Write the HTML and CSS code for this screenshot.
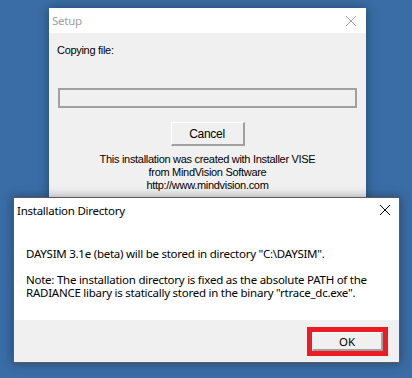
FILE: index.html
```html
<!DOCTYPE html>
<html>
<head>
  <title>Setup</title>
  <link rel="stylesheet" href="styles.css">
</head>
<body>

  <!-- Setup window (behind) -->
  <div class="window setup">
    <div class="titlebar">
      <span class="title">Setup</span>
      <svg class="close" width="12" height="12" viewBox="0 0 12 12">
        <path d="M1 1 L11 11 M11 1 L1 11" stroke="#a0a0a0" stroke-width="1" fill="none"/>
      </svg>
    </div>
    <div class="setup-body">
      <div class="label">Copying file:</div>
      <div class="progress"></div>
      <button class="classic cancel">Cancel</button>
      <p class="credits">
        This installation was created with Installer VISE<br>
        from MindVision Software<br>
        http://www.mindvision.com
      </p>
    </div>
  </div>

  <!-- Installation Directory message box -->
  <div class="window dialog">
    <div class="dialog-main">
      <div class="titlebar">
        <span class="title">Installation Directory</span>
        <svg class="close" width="12" height="12" viewBox="0 0 12 12">
          <path d="M1 1 L11 11 M11 1 L1 11" stroke="#000" stroke-width="1" fill="none"/>
        </svg>
      </div>
      <div class="message">
        <p>DAYSIM 3.1e (beta) will be stored in directory "C:\DAYSIM".</p>
        <p>Note: The installation directory is fixed as the absolute PATH of the<br>
        RADIANCE libary is statically stored in the binary "rtrace_dc.exe".</p>
      </div>
    </div>
    <div class="footer">
      <div class="highlight">
        <button class="classic ok">OK</button>
      </div>
    </div>
  </div>

</body>
</html>
```

FILE: styles.css
```css
html, body {
  margin: 0;
  padding: 0;
}

body {
  width: 412px;
  height: 378px;
  background-color: #3a6ca5;
  position: relative;
  overflow: hidden;
}

.window {
  position: absolute;
  background-color: #f0f0f0;
  box-shadow: 0 0 10px rgba(0, 0, 0, 0.35);
}

.titlebar {
  display: flex;
  align-items: center;
  justify-content: space-between;
  background-color: #fff;
}

/* Setup window */
.setup {
  left: 49px;
  top: 8px;
  width: 317px;
  height: 200px;
  font-family: "Liberation Sans", Arial, sans-serif;
  font-size: 11px;
  letter-spacing: -0.3px;
  color: #000;
}

.setup .titlebar {
  height: 25px;
  padding: 0 9px 0 3px;
}

.setup .title {
  font-family: "Noto Sans", sans-serif;
  font-size: 11.5px;
  letter-spacing: -0.25px;
  color: #a0a0a0;
}

.setup-body {
  display: flex;
  flex-direction: column;
  align-items: center;
  padding: 11px 8px 0;
}

.label {
  align-self: flex-start;
  line-height: 13px;
}

.progress {
  margin-top: 31px;
  width: 295px;
  height: 16px;
  border: 2px solid #a0a0a0;
  background-color: #f0f0f0;
}

button.classic {
  font-family: "Liberation Sans", Arial, sans-serif;
  font-size: 12px;
  letter-spacing: -0.3px;
  color: #000;
  background-color: #f0f0f0;
  border-style: solid;
  border-width: 1px 2px 2px 1px;
  border-color: #fff #a0a0a0 #a0a0a0 #fff;
  padding: 0;
  margin: 0;
}

button.cancel {
  margin-top: 14px;
  width: 74px;
  height: 24px;
}

.credits {
  margin: 7px 0 0;
  text-align: center;
  line-height: 13px;
}

/* Installation Directory dialog */
.dialog {
  left: 13px;
  top: 197px;
  width: 385px;
  height: 164px;
  border: 1px solid #5a5a5a;
  font-family: "Noto Sans", "Open Sans", sans-serif;
  font-size: 11.5px;
  letter-spacing: -0.25px;
  color: #000;
  display: flex;
  flex-direction: column;
}

.dialog-main {
  background-color: #fff;
  height: 122px;
}

.dialog .titlebar {
  height: 24px;
  padding: 0 8px 0 3px;
}

.message {
  padding: 25px 12px 0;
  white-space: nowrap;
}

.message p {
  margin: 0 0 13px;
  line-height: 13px;
}

.footer {
  flex: 1;
  display: flex;
  justify-content: flex-end;
  align-items: flex-start;
  padding: 7px 11px 0 0;
}

.highlight {
  border: 5px solid #ed1c24;
}

button.ok {
  display: block;
  width: 71px;
  height: 19px;
  font-family: "Noto Sans", sans-serif;
  font-size: 11.5px;
  letter-spacing: 0;
}
```
